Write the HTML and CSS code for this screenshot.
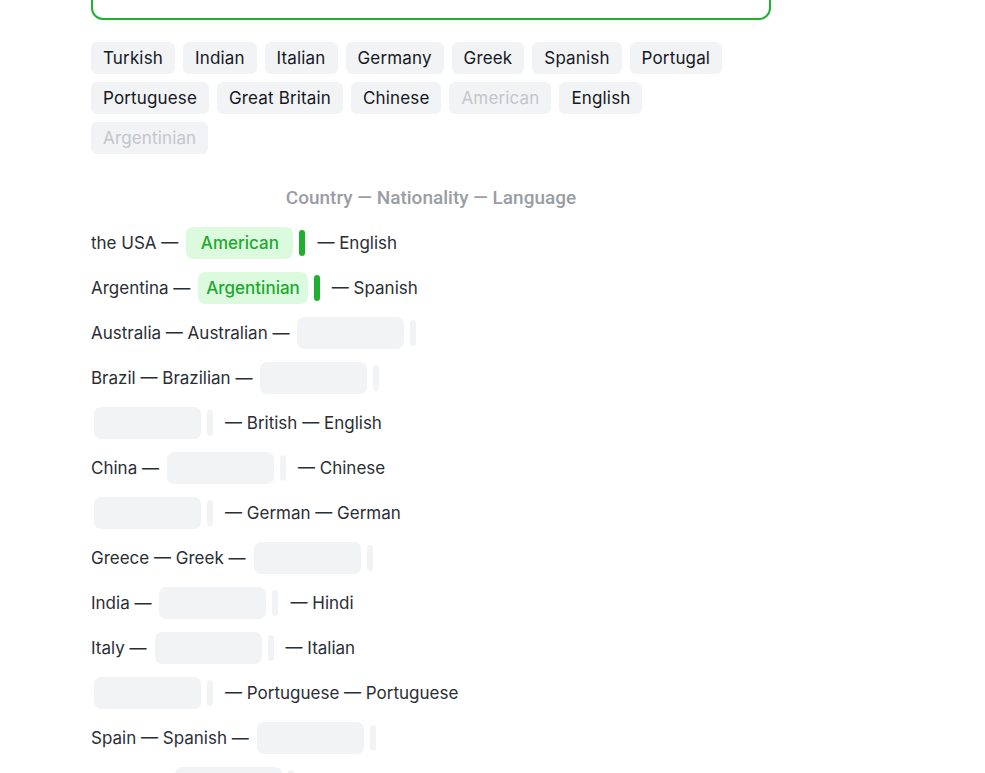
FILE: index.html
```html
<!DOCTYPE html>
<html lang="en">
<head>
<meta charset="utf-8">
<title>Country — Nationality — Language</title>
<link rel="stylesheet" href="styles.css">
</head>
<body>
<main class="wrap">
  <div class="drop-box"></div>

  <div class="bank">
    <span class="chip">Turkish</span>
    <span class="chip">Indian</span>
    <span class="chip">Italian</span>
    <span class="chip">Germany</span>
    <span class="chip">Greek</span>
    <span class="chip">Spanish</span>
    <span class="chip">Portugal</span>
    <span class="chip">Portuguese</span>
    <span class="chip">Great Britain</span>
    <span class="chip">Chinese</span>
    <span class="chip used">American</span>
    <span class="chip">English</span>
    <span class="chip used">Argentinian</span>
  </div>

  <h2 class="title">Country — Nationality — Language</h2>

  <div class="rows">
    <div class="row"><span class="txt">the USA —</span><span class="slot"><span class="gap filled">American</span><span class="bar on"></span></span><span class="txt">— English</span></div>
    <div class="row"><span class="txt">Argentina —</span><span class="slot"><span class="gap filled">Argentinian</span><span class="bar on"></span></span><span class="txt">— Spanish</span></div>
    <div class="row"><span class="txt">Australia — Australian —</span><span class="slot"><span class="gap"></span><span class="bar"></span></span></div>
    <div class="row"><span class="txt">Brazil — Brazilian —</span><span class="slot"><span class="gap"></span><span class="bar"></span></span></div>
    <div class="row"><span class="slot first"><span class="gap"></span><span class="bar"></span></span><span class="txt">— British — English</span></div>
    <div class="row"><span class="txt">China —</span><span class="slot"><span class="gap"></span><span class="bar"></span></span><span class="txt">— Chinese</span></div>
    <div class="row"><span class="slot first"><span class="gap"></span><span class="bar"></span></span><span class="txt">— German — German</span></div>
    <div class="row"><span class="txt">Greece — Greek —</span><span class="slot"><span class="gap"></span><span class="bar"></span></span></div>
    <div class="row"><span class="txt">India —</span><span class="slot"><span class="gap"></span><span class="bar"></span></span><span class="txt">— Hindi</span></div>
    <div class="row"><span class="txt">Italy —</span><span class="slot"><span class="gap"></span><span class="bar"></span></span><span class="txt">— Italian</span></div>
    <div class="row"><span class="slot first"><span class="gap"></span><span class="bar"></span></span><span class="txt">— Portuguese — Portuguese</span></div>
    <div class="row"><span class="txt">Spain — Spanish —</span><span class="slot"><span class="gap"></span><span class="bar"></span></span></div>
    <div class="row"><span class="txt">Turkey —</span><span class="slot"><span class="gap"></span><span class="bar"></span></span><span class="txt">— Turkish</span></div>
  </div>
</main>
</body>
</html>
```

FILE: styles.css
```css
* { box-sizing: border-box; }

html, body {
  margin: 0;
  padding: 0;
  background: #ffffff;
}

body {
  font-family: "Inter", "Roboto", "Liberation Sans", sans-serif;
  color: #23272e;
  overflow: hidden;
  height: 773px;
}

.wrap {
  width: 680px;
  margin-left: 91px;
}

.drop-box {
  height: 100px;
  margin-top: -80px;
  border: 2px solid #1eb02e;
  border-radius: 12px;
}

.bank {
  margin-top: 22px;
  display: flex;
  flex-wrap: wrap;
  gap: 8px 8px;
  width: 640px;
}

.chip {
  height: 32px;
  padding: 0 12px;
  display: inline-flex;
  align-items: center;
  background: #f2f3f5;
  border-radius: 6px;
  font-size: 17px;
  letter-spacing: 0.15px;
  color: #15181f;
}

.chip.used {
  color: #c3c6cb;
}

.title {
  margin: 32px 0 17px;
  height: 24px;
  line-height: 24px;
  text-align: center;
  font-family: "Roboto", "Inter", sans-serif;
  font-size: 19px;
  font-weight: 500;
  color: #9a9da3;
}

.rows {
  display: flex;
  flex-direction: column;
  gap: 13px;
}

.row {
  height: 32px;
  display: flex;
  align-items: center;
  font-size: 17px;
  color: #2a2e35;
  white-space: nowrap;
}

.txt {
  line-height: 1;
}

.slot {
  display: flex;
  align-items: center;
  gap: 6px;
  margin: 0 12px 0 8px;
}

.slot.first {
  margin-left: 3px;
}

.gap {
  min-width: 107px;
  height: 32px;
  padding: 0 8px;
  display: inline-flex;
  align-items: center;
  justify-content: center;
  background: #f2f3f5;
  border-radius: 7px;
}

.gap.filled {
  background: #dcfbde;
  color: #1ea82f;
  font-weight: 500;
}

.bar {
  width: 6px;
  height: 26px;
  border-radius: 3px;
  background: #f2f3f5;
}

.bar.on {
  background: #1eb02e;
}
```
